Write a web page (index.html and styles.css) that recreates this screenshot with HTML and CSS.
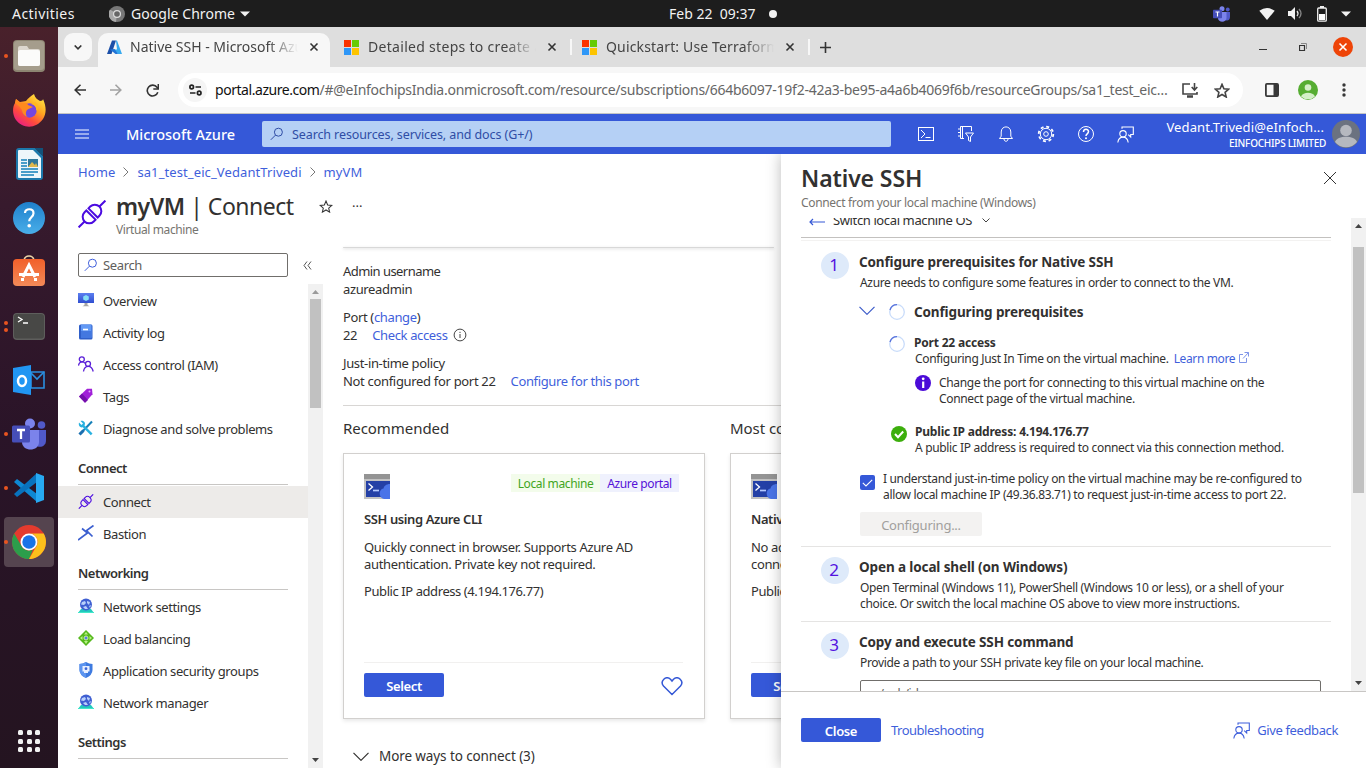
FILE: index.html
```html
<!DOCTYPE html>
<html lang="en">
<head>
<meta charset="utf-8">
<title>Native SSH - Microsoft Azure</title>
<link rel="stylesheet" href="styles.css">
</head>
<body>
<svg class="defs" width="0" height="0" aria-hidden="true">
  <defs>
    <linearGradient id="gBlue" x1="0" y1="0" x2="0" y2="1"><stop offset="0" stop-color="#5c7ff0"/><stop offset="1" stop-color="#2f4fd0"/></linearGradient>
    <linearGradient id="gFox" x1="0.9" y1="0" x2="0.2" y2="1"><stop offset="0" stop-color="#fff04a"/><stop offset=".4" stop-color="#ffa620"/><stop offset=".7" stop-color="#ff4a3d"/><stop offset="1" stop-color="#e51a8c"/></linearGradient>
    <linearGradient id="gOrange" x1="0" y1="0" x2="0" y2="1"><stop offset="0" stop-color="#f2602a"/><stop offset="1" stop-color="#f28a58"/></linearGradient>
    <linearGradient id="gHelp" x1="0" y1="0" x2="0" y2="1"><stop offset="0" stop-color="#1f80cc"/><stop offset="1" stop-color="#49aee9"/></linearGradient>
  </defs>
  <symbol id="search" viewBox="0 0 14 14"><g fill="none" stroke="currentColor"><circle cx="8.400" cy="5.200" r="4"/><path d="M5.500 8.100.8 12.800"/></g></symbol>
  <symbol id="plug" viewBox="0 0 28 28"><g fill="none" stroke="#4b0be0" stroke-width="2" transform="rotate(-45 14 14)"><path d="M-5 14H3.500M24.500 14H33"/><path d="M12.500 7.500H10a6.500 6.500 0 0 0 0 13h2.500Z"/><path d="M15.500 7.500H18a6.500 6.500 0 0 1 0 13h-2.500Z"/></g></symbol>
  <symbol id="globe" viewBox="0 0 16 16"><path d="M3 11h10l3 4H0Z" fill="#22c9bd"/><path d="M0 14h16v1H0Z" fill="#42e8ca"/><circle cx="8" cy="6.500" r="6" fill="#3f5fd2"/><path d="M4 4l3-1 1 2-2 2-3-.500ZM9 3l3 1-1 3-2-2ZM5 9l3-1 2 3H7ZM11 8l2-1-1 3Z" fill="#b9d0fb"/></symbol>
  <symbol id="cli" viewBox="0 0 26 25"><path d="M0 0h26v5H0Z" fill="#949494"/><path d="M0 5h26v20H0Z" fill="#c2c2c2"/><path d="M2 7h24v16H2Z" fill="#2440a6"/><path d="m4.500 9.500 4 3.500-4 3.500" fill="none" stroke="#fff" stroke-width="1.300"/><path d="M9 16.500h6" stroke="#b4c9ff" stroke-width="1.700"/><path d="M26 10c-4 0-6 2.200-6.500 4.500-5 .5-5.300 9.500.5 10.500h6Z" fill="#4a74e8"/></symbol>
  <symbol id="feedback" viewBox="0 0 17 17"><g fill="none" stroke="currentColor" stroke-width="1.100"><circle cx="6" cy="7.800" r="3.200"/><path d="M.800 16.500c.5-3.500 2.500-5.400 5.200-5.400s4.700 1.900 5.200 5.400"/><path d="M5 2.800V1h11.300v7.500h-2.600v2.400l-2.500-2.300"/></g></symbol>
  <symbol id="spin" viewBox="0 0 16 16"><circle cx="8" cy="8" r="7.300" fill="none" stroke="#c9dcfa" stroke-width="1.300"/><path d="M1 6A7.300 7.300 0 0 1 8 .7" fill="none" stroke="#5872dc" stroke-width="1.300"/></symbol>
  <symbol id="chev" viewBox="0 0 16 9"><path d="m.5.8 7.500 7.500L15.500.8" fill="none" stroke="currentColor" stroke-width="1.200"/></symbol>
  <symbol id="x" viewBox="0 0 10 10"><path d="m1.500 1.500 7 7M8.500 1.500l-7 7" fill="none" stroke="currentColor" stroke-width="1.600"/></symbol>
  <symbol id="ms" viewBox="0 0 15 15"><path fill="#fb3300" d="M0 0h7v7H0Z"/><path fill="#67cb03" d="M8 0h7v7H8Z"/><path fill="#2f97f7" d="M0 8h7v7H0Z"/><path fill="#fdc400" d="M8 8h7v7H8Z"/></symbol>
  <symbol id="teams" viewBox="0 0 34 32"><circle cx="18" cy="5.500" r="5" fill="#7b83eb"/><circle cx="29.500" cy="7" r="3.800" fill="#5059c9"/><path d="M23 12h11v10c0 8-8 8-11 5Z" fill="#5059c9"/><path d="M10 12h17v12c0 10-17 10-17 0Z" fill="#7b83eb"/><rect y="7.500" width="18" height="17" rx="1.500" fill="#464eb8"/><path d="M5 12h8M9 12v9" stroke="#fff" stroke-width="2.300"/></symbol>
</svg>

<header class="gnome">
  <span class="activities">Activities</span>
  <svg class="gchrome" width="16" height="16" viewBox="0 0 16 16"><circle cx="8" cy="8" r="8" fill="#777"/><path d="M8 8 1 3.500A8 8 0 0 0 7 16Z" fill="#a8a8a8"/><circle cx="8" cy="8" r="4" fill="#ddd"/><circle cx="8" cy="8" r="2.800" fill="#666"/></svg>
  <span class="appname">Google Chrome</span>
  <svg width="10" height="6" viewBox="0 0 10 6"><path d="M0 .5h10L5 5.500Z" fill="#f2f2f2"/></svg>
  <span class="date">Feb 22&nbsp; 09:37</span>
  <i class="recdot"></i>
  <span class="tray">
    <svg width="17" height="16"><use href="#teams"/></svg>
    <svg class="wifi" width="16" height="12" viewBox="0 0 16 12"><path d="M.3 2.800Q8-2.600 15.700 2.800L8 12Z" fill="#f2f2f2"/></svg>
    <svg class="vol" width="15" height="13" viewBox="0 0 15 13"><path d="M0 4h3l4-4v13L3 9H0Z" fill="#f2f2f2"/><path d="M9 4q2 2.500 0 5" fill="none" stroke="#e5e5e5" stroke-width="1.300"/><path d="M11 2q4 4.500 0 9" fill="none" stroke="#888" stroke-width="1.300"/></svg>
    <svg class="bat" width="10" height="16" viewBox="0 0 10 16"><path d="M3 0h4v2H3Z" fill="#eee"/><rect x=".7" y="2" width="8.600" height="13.200" rx="1" fill="none" stroke="#eee" stroke-width="1.300"/><path d="M2 8h6v6H2Z" fill="#fff"/></svg>
    <svg width="10" height="6" viewBox="0 0 10 6"><path d="M0 .5h10L5 5.500Z" fill="#f2f2f2"/></svg>
  </span>
</header>

<div class="desk">
  <nav class="dock">
    <div class="app run"><svg width="32" height="32" viewBox="0 0 32 32"><rect width="32" height="32" rx="4" fill="#8d8572"/><rect x="1" y="1" width="30" height="29" rx="3" fill="#a59d8c"/><path d="M5 8q0-2 2-2h7l2 3h9q2 0 2 2v13q0 2-2 2H7q-2 0-2-2Z" fill="#dcd7ce"/><rect x="5" y="10" width="22" height="16" rx="2" fill="#fbfbfa"/></svg></div>
    <div class="app"><svg width="33" height="34" viewBox="0 0 33 34"><path d="M21 1c1 4 4 6 6 7 2 0 3-1 3-2 4 9 3 15 0 20-7 10-20 10-27 1C-1 21-.5 14 2 10l1-4 4 3 6-1c2-3 5-5 8-7Z" fill="url(#gFox)"/><circle cx="16.500" cy="17.500" r="7.200" fill="#7546e0"/><path d="M2 10l1-4 4 4 7 0 1 2 5 2c-2 1-5 2-6 3-2 3-1 6 1 7-4-1-6-4-6-7l-3-4Z" fill="#ff8a1e"/><path d="M18 11c4 1 6 4 5 7 3-2 3-7-1-9Z" fill="#ffb820"/></svg></div>
    <div class="app"><svg width="27" height="32" viewBox="0 0 27 32"><path d="M3 0h16l8 8v21q0 3-3 3H3q-3 0-3-3V3q0-3 3-3Z" fill="#1c78ab"/><path d="M3 2h14l8 8v20H3q-1 0-1-1V3q0-1 1-1Z" fill="#eef6fa"/><path d="M19 0h8v8Z" fill="#12527a"/><path d="M5 12h6M5 15h6M5 18h6M5 21h17M5 24h17M5 27h13" stroke="#1380b9" stroke-width="1.500"/><rect x="12" y="11" width="10" height="8" fill="#31789b"/><path d="m12 19 4-5 3 3 1-2 2 4Z" fill="#e0b84c"/></svg></div>
    <div class="app"><svg width="32" height="32" viewBox="0 0 32 32"><circle cx="16" cy="16" r="16" fill="url(#gHelp)"/><path d="M12 11c0-5 8.500-5 8.500.2 0 4-4.300 4-4.300 8" fill="none" stroke="#fff" stroke-width="2.200"/><circle cx="16.200" cy="23.800" r="1.800" fill="#fff"/></svg></div>
    <div class="app bag"><svg width="32" height="31" viewBox="0 0 32 31"><path d="M11 5q1-4 5-4t5 4" fill="none" stroke="#ead4a6" stroke-width="1.500"/><rect y="4" width="32" height="27" rx="4" fill="url(#gOrange)"/><path d="M10 22 16 10l6 12M6 19.500h20" fill="none" stroke="#fff" stroke-width="3"/><path d="M8 24.500h3M21 24.500h3" stroke="#fff" stroke-width="3"/></svg></div>
    <div class="app run two"><svg width="32" height="27" viewBox="0 0 32 27"><rect width="32" height="27" rx="4" fill="#5e5e5c"/><rect x="1" y="1" width="30" height="24.500" rx="3" fill="#484846"/><path d="m5 4 4 2.500L5 9M10 10h5" fill="none" stroke="#fff" stroke-width="1.300"/></svg></div>
    <div class="app"><svg width="32" height="30" viewBox="0 0 32 30"><path d="M18 7h13v16H18Z" fill="none" stroke="#2a8fe0" stroke-width="1.600"/><path d="m18 8 6 6 7-7" fill="none" stroke="#2a8fe0" stroke-width="1.600"/><path d="M0 3 18 0v30L0 27Z" fill="#2196f3"/><ellipse cx="9" cy="16" rx="4" ry="5" fill="none" stroke="#fff" stroke-width="2.500"/></svg></div>
    <div class="app run"><svg width="34" height="32"><use href="#teams"/></svg></div>
    <div class="app run"><svg width="30" height="30" viewBox="0 0 30 30"><path d="M0 9 3 6l20 15v8Z" fill="#0e88d3"/><path d="m0 21 3 3L23 9V0Z" fill="#0872bd"/><path d="m22 0 8 3v24l-8 3Z" fill="#27a9f2"/></svg></div>
    <div class="app run active"><svg width="34" height="34" viewBox="0 0 34 34"><circle cx="17" cy="17" r="17" fill="#e33b2e"/><path d="M2.300 8.500 9.600 21.200A8.500 8.500 0 0 0 21 24.500L17 34A17 17 0 0 1 2.300 8.500Z" fill="#2c9e4b"/><path d="M31.700 8.500A17 17 0 0 1 17 34l7.400-12.700A8.500 8.500 0 0 0 17 8.500Z" fill="#fcc01c"/><circle cx="17" cy="17" r="8.500" fill="#fff"/><circle cx="17" cy="17" r="6.700" fill="#1a73e8"/></svg></div>
    <div class="grid"><i></i><i></i><i></i><i></i><i></i><i></i><i></i><i></i><i></i></div>
  </nav>

  <section class="window">
    <div class="tabstrip">
      <button class="tabsearch"><svg width="8" height="5" viewBox="0 0 8 5"><path d="m.7.5 3.300 3.300L7.300.5" fill="none" stroke="#333" stroke-width="1.600"/></svg></button>
      <div class="tab on">
        <svg width="15" height="15" viewBox="0 0 15 15"><path d="M5 .5h4L4.500 14H0Z" fill="#1b4fa8"/><path d="M9 .5h1L15 14h-4L6 9.500h4Z" fill="#37a9ee"/><path d="m3 9.500 5.500 4.500H11L7.500 9Z" fill="#2174d6"/></svg>
        <span class="tt n1">Native SSH - Microsoft Azure</span><svg class="tx" width="10" height="10"><use href="#x"/></svg>
      </div>
      <div class="tab"><svg width="15" height="15"><use href="#ms"/></svg><span class="tt n2">Detailed steps to create an</span><svg class="tx" width="10" height="10"><use href="#x"/></svg><i class="tsep"></i></div>
      <div class="tab"><svg width="15" height="15"><use href="#ms"/></svg><span class="tt n3">Quickstart: Use Terraform</span><svg class="tx" width="10" height="10"><use href="#x"/></svg><i class="tsep"></i></div>
      <svg class="plus" width="11" height="11" viewBox="0 0 11 11"><path d="M5.500 0v11M0 5.500h11" stroke="#333" stroke-width="1.600"/></svg>
      <div class="winctl">
        <svg width="8" height="8" viewBox="0 0 8 8"><path d="M0 6.500h8" stroke="#333"/></svg>
        <svg width="8" height="8" viewBox="0 0 8 8"><path d="M.5 2.500h5v5h-5Z" fill="none" stroke="#333" stroke-width="1.200"/><path d="M2 .5h5.500v5.500" fill="none" stroke="#888"/></svg>
        <span class="wclose"><svg width="10" height="10"><use href="#x"/></svg></span>
      </div>
    </div>
    <div class="toolbar">
      <svg width="12" height="12" viewBox="0 0 12 12"><path d="M6.500.7 1.200 6l5.300 5.300M1.200 6H12" fill="none" stroke="#333" stroke-width="1.600"/></svg>
      <svg class="fwd" width="12" height="12" viewBox="0 0 12 12"><path d="M5.500.7 10.800 6l-5.300 5.300M10.800 6H0" fill="none" stroke="#a2a2a2" stroke-width="1.600"/></svg>
      <svg class="reload" width="13" height="13" viewBox="0 0 13 13"><path d="M11.800 8.200A5.400 5.400 0 1 1 11 3.300l.9 1.200" fill="none" stroke="#333" stroke-width="1.600"/><path d="M12.300 0v5h-5" fill="none" stroke="#333" stroke-width="1.500"/></svg>
      <div class="omni">
        <span class="site"><svg width="13" height="12" viewBox="0 0 13 12"><g fill="none" stroke="#222" stroke-width="1.700"><circle cx="2.700" cy="3" r="1.800"/><path d="M6.500 3h5.500M1 9h5.500"/><circle cx="10.200" cy="9" r="1.800"/></g></svg></span>
        <span class="url"><b>portal.azure.com</b>/#@eInfochipsIndia.onmicrosoft.com/resource/subscriptions/664b6097-19f2-42a3-be95-a4a6b4069f6b/resourceGroups/sa1_test_eic…</span>
        <svg class="inst" width="17" height="15" viewBox="0 0 17 15"><path d="M8 1H1v10h14V9" fill="none" stroke="#444" stroke-width="1.600"/><path d="M5 13.500h6" stroke="#444" stroke-width="2.500"/><path d="M12.500 0v6.500M9.700 4l2.800 3 2.800-3" fill="none" stroke="#444" stroke-width="1.600"/></svg>
        <svg class="star" width="16" height="15" viewBox="0 0 16 15"><path d="m8 1.400 1.900 4.400 4.800.4-3.600 3.200 1.100 4.600L8 11.500 3.800 14l1.100-4.600L1.300 6.200l4.800-.4Z" fill="none" stroke="#444" stroke-width="1.600"/></svg>
      </div>
      <svg class="side" width="14" height="14" viewBox="0 0 14 14"><rect x=".9" y=".9" width="12.200" height="12.200" rx="1" fill="none" stroke="#383838" stroke-width="1.800"/><path d="M8.500 1h4.500v12H8.500Z" fill="#383838"/></svg>
      <svg class="prof" width="20" height="20" viewBox="0 0 20 20"><circle cx="10" cy="10" r="10" fill="#56ad32"/><circle cx="10" cy="7.500" r="3.300" fill="#d4efc8"/><path d="M3 16.500c2-5 12-5 14 0a10 10 0 0 1-14 0Z" fill="#d4efc8"/></svg>
      <svg class="dots" width="4" height="14" viewBox="0 0 4 14"><g fill="#383838"><circle cx="2" cy="2" r="1.700"/><circle cx="2" cy="7" r="1.700"/><circle cx="2" cy="12" r="1.700"/></g></svg>
    </div>

    <div class="azbar">
      <svg width="14" height="10" viewBox="0 0 14 10"><path d="M0 1h14M0 5h14M0 9h14" stroke="#b9c6f3" stroke-width="1.400"/></svg>
      <span class="brand">Microsoft Azure</span>
      <div class="azsearch"><svg width="14" height="14"><use href="#search"/></svg><span>Search resources, services, and docs (G+/)</span></div>
      <div class="azicons">
        <svg width="18" height="16" viewBox="0 0 18 16"><rect x="1.500" y="1.500" width="15" height="13" fill="none" stroke="#fff"/><path d="m4 4 4 4-4 4M8.500 11.500h5" fill="none" stroke="#fff"/></svg>
        <svg width="18" height="18" viewBox="0 0 18 18"><g fill="none" stroke="#fff"><path d="M7 13.500H3.500v-12h11V6M5.500 1.500v12M1 4h2.500M1 7.500h2.500M1 11h2.500"/><path d="M8.500 8h8l-3 4v4.500l-2-1V12Z"/></g></svg>
        <svg width="18" height="18" viewBox="0 0 18 18"><path d="M2.500 13.500h13l-1.700-2.300V7c0-6.800-9.600-6.800-9.600 0v4.200ZM7 14c0 3 4 3 4 0" fill="none" stroke="#fff"/></svg>
        <svg width="18" height="18" viewBox="0 0 18 18"><g fill="none" stroke="#fff"><circle cx="9" cy="9" r="2.300"/><circle cx="9" cy="9" r="5.700"/><circle cx="9" cy="9" r="7.300" stroke-width="1.800" stroke-dasharray="3 2.730"/></g></svg>
        <svg width="18" height="18" viewBox="0 0 18 18"><circle cx="9" cy="9" r="7.500" fill="none" stroke="#fff"/><path d="M6.500 7c0-3.500 5-3.500 5-.4C11.500 9 9 8.700 9 11" fill="none" stroke="#fff" stroke-width="1.500"/><circle cx="9" cy="13.200" r="1" fill="#fff"/></svg>
        <svg width="17" height="17"><use href="#feedback"/></svg>
      </div>
      <div class="who"><span class="mail">Vedant.Trivedi@eInfoch...</span><span class="org">EINFOCHIPS LIMITED</span></div>
      <svg class="avatar" width="28" height="28" viewBox="0 0 28 28"><circle cx="14" cy="14" r="14" fill="#6b7280"/><circle cx="14" cy="10.500" r="5.800" fill="#b5b8bf"/><path d="M3 22c2-7 20-7 22 0a14 14 0 0 1-22 0Z" fill="#b5b8bf"/></svg>
    </div>

    <div class="portal">
      <main class="main">
        <div class="crumbs"><a>Home</a><svg width="6" height="10" viewBox="0 0 6 10"><path d="m.5.5 4.500 4.500L.5 9.500" fill="none" stroke="#777"/></svg><a>sa1_test_eic_VedantTrivedi</a><svg width="6" height="10" viewBox="0 0 6 10"><path d="m.5.5 4.500 4.500L.5 9.500" fill="none" stroke="#777"/></svg><a>myVM</a></div>
        <div class="title">
          <svg class="bigplug" width="28" height="28"><use href="#plug"/></svg>
          <div class="tcol"><h1><b>myVM</b><span> | Connect</span></h1><div class="kind">Virtual machine</div></div>
          <svg class="fav" width="14" height="13" viewBox="0 0 16 15"><path d="m8 1.200 1.900 4.600 4.800.4-3.600 3.200 1.100 4.600L8 11.500 3.800 14l1.100-4.600L1.300 6.200l4.800-.4Z" fill="none" stroke="#333" stroke-width="1.200"/></svg>
          <span class="more">···</span>
        </div>
        <div class="cols">
          <aside class="side-menu">
            <div class="msearch"><div class="mbox"><svg width="14" height="14"><use href="#search"/></svg><span>Search</span></div><svg width="9" height="9" viewBox="0 0 9 9"><path d="M4 .5 1 4.500l3 4M8 .5 5 4.500l3 4" fill="none" stroke="#555"/></svg></div>
            <div class="mscroll">
              <div class="mlist">
                <div class="mi"><svg width="16" height="16" viewBox="0 0 16 16"><path d="M0 1h16v10H0Z" fill="url(#gBlue)"/><path d="m8 3 2.800 1.500v3L8 9 5.200 7.500v-3Z" fill="#85def5"/><path d="M6.500 11h3v2l2 1.300h-7l2-1.300Z" fill="#a5a5a5"/></svg><span>Overview</span></div>
                <div class="mi"><svg width="16" height="16" viewBox="0 0 16 16"><rect x="1" y=".5" width="13.500" height="15" rx="1.500" fill="#2f5fc9"/><rect x="3" y=".5" width="10.500" height="13" fill="#6299f5"/><rect x="3" y="7" width="10.500" height="7" fill="#4478e0"/><path d="M5 5.500h5" stroke="#fff" stroke-width="1.600"/></svg><span>Activity log</span></div>
                <div class="mi"><svg width="16" height="16" viewBox="0 0 16 16"><g fill="none" stroke="#5a1fd8" stroke-width="1.300"><circle cx="3.800" cy="3.300" r="2.500"/><circle cx="10" cy="7.800" r="2.500"/><path d="M.5 9.500C1 7 2.500 5.800 4 5.800s2.500.5 3.200 1.500M5.500 15.500c.5-3.500 2.500-5.200 4.700-5.200s4.300 1.700 5 5.200"/></g></svg><span>Access control (IAM)</span></div>
                <div class="mi"><svg width="16" height="16" viewBox="0 0 16 16"><path d="M9 .8h5l.5 5.500L7 14.800 1 8.500Z" fill="#a020d8"/><path d="M7 14.800 1 8.500l3-3 6 6.500Z" fill="#7410ab"/><circle cx="11.500" cy="3.500" r="1" fill="#e2a6f7"/></svg><span>Tags</span></div>
                <div class="mi"><svg width="16" height="16" viewBox="0 0 16 16"><path d="M2 14 14 1.500" stroke="#1680b8" stroke-width="2"/><path d="M1 2.500 3.500 5 5 3.500 2.500 1C6 .2 8 3 6.500 5.500l8 8-1.700 1.800-8-8C2 8 .2 5.500 1 2.500Z" fill="#29b1e0"/><path d="m1.500 14.500 4-4" stroke="#1b6fb0" stroke-width="3"/></svg><span>Diagnose and solve problems</span></div>
                <h3>Connect</h3>
                <div class="mi sel"><svg width="15" height="15"><use href="#plug"/></svg><span>Connect</span></div>
                <div class="mi"><svg width="16" height="16" viewBox="0 0 16 16"><g fill="none" stroke="#3b5fd0" stroke-width="1.700"><path d="m0 15 9.500-7L4 3.500"/><path d="M15.500.5 8.500 5.500l6 6"/></g></svg><span>Bastion</span></div>
                <h3>Networking</h3>
                <div class="mi"><svg width="16" height="16"><use href="#globe"/></svg><span>Network settings</span></div>
                <div class="mi"><svg width="16" height="16" viewBox="0 0 16 16"><path d="m8 0 8 8-8 8-8-8Z" fill="#55b81d"/><path d="m8 2 2 2.500H6ZM2 8l2.500-2v4ZM14 8l-2.500-2v4ZM8 14l-2-3h4Z" fill="#b9f286"/><circle cx="8" cy="8" r="2" fill="#5b79e9" stroke="#c5f79d"/></svg><span>Load balancing</span></div>
                <div class="mi"><svg width="16" height="16" viewBox="0 0 16 16"><path d="M8 0q3 2 6.500 2v6q0 5-6.500 8Q1.500 13 1.500 8V2Q5 2 8 0Z" fill="#3e7be0"/><path d="M8 0v16Q1.500 13 1.500 8V2Q5 2 8 0Z" fill="#5c94ef"/><path d="M4.500 4h7v5.500h-7ZM6 11h4V9.500H6Z" fill="#e8f0ff"/><circle cx="8" cy="6.700" r="1.400" fill="#3e66d6"/></svg><span>Application security groups</span></div>
                <div class="mi"><svg width="16" height="16"><use href="#globe"/></svg><span>Network manager</span></div>
                <h3>Settings</h3>
              </div>
              <div class="sb"><svg class="up" width="7" height="4" viewBox="0 0 7 4"><path d="m0 4 3.500-4L7 4Z" fill="#9a9a9a"/></svg><i class="thumb"></i><svg class="dn" width="7" height="4" viewBox="0 0 7 4"><path d="m0 0 3.500 4L7 0Z" fill="#444"/></svg></div>
            </div>
          </aside>
          <section class="body">
            <div class="topcard"></div>
            <dl>
              <dt class="adm">Admin username</dt><dd>azureadmin</dd>
              <dt>Port (<a>change</a>)</dt><dd><span>22</span><a>Check access</a><svg width="14" height="14" viewBox="0 0 14 14"><circle cx="7" cy="7" r="5.900" fill="none" stroke="#444"/><path d="M7 6v4M7 3.800v1.200" stroke="#444"/></svg></dd>
              <dt>Just-in-time policy</dt><dd><span class="nc">Not configured for port 22</span><a>Configure for this port</a></dd>
            </dl>
            <div class="cards">
              <div class="cardcol"><h2>Recommended</h2>
                <article class="card">
                  <div class="chead"><svg width="26" height="25"><use href="#cli"/></svg><span class="tag g">Local machine</span><span class="tag p">Azure portal</span></div>
                  <h4>SSH using Azure CLI</h4>
                  <p class="desc">Quickly connect in browser. Supports Azure AD<br>authentication. Private key not required.</p>
                  <p class="ip">Public IP address (4.194.176.77)</p>
                  <div class="cfoot"><button class="btn">Select</button><svg width="22" height="19" viewBox="0 0 22 19"><path d="M11 17.500 2.500 9C-1.500 4 5-1.800 9.500 2.300L11 4l1.500-1.700C17-1.800 23.500 4 19.500 9Z" fill="none" stroke="#3558d6" stroke-width="1.500"/></svg></div>
                </article></div>
              <div class="cardcol"><h2>Most common</h2>
                <article class="card">
                  <div class="chead"><svg width="26" height="25"><use href="#cli"/></svg></div>
                  <h4>Native</h4>
                  <p class="desc">No added<br>connect</p>
                  <p class="ip">Public IP</p>
                  <div class="cfoot"><button class="btn">Select</button></div>
                </article></div>
            </div>
            <div class="ways"><svg width="16" height="9"><use href="#chev"/></svg><span>More ways to connect (3)</span></div>
          </section>
        </div>
      </main>

      <aside class="panel">
        <div class="phead"><div><h2>Native SSH</h2><div class="psub">Connect from your local machine (Windows)</div></div><svg width="14" height="14" viewBox="0 0 14 14"><path d="m1 1 12 12M13 1 1 13" stroke="#333"/></svg></div>
        <div class="pscroll">
          <div class="pcontent">
            <div class="switch"><svg width="16" height="8" viewBox="0 0 16 8"><path d="M4 1 1 4l3 3M1 4h15" fill="none" stroke="#3558d6" stroke-width="1.200"/></svg><span>Switch local machine OS</span><svg class="sc" width="8" height="5" viewBox="0 0 8 5"><path d="m.5.5 3.500 3.500L7.500.5" fill="none" stroke="#444"/></svg></div>
            <div class="thin"></div>
            <section class="step s1"><div class="num">1</div><div class="sb2">
              <h3>Configure prerequisites for Native SSH</h3>
              <p>Azure needs to configure some features in order to connect to the VM.</p>
              <div class="conf"><svg class="cv" width="16" height="9"><use href="#chev"/></svg><svg width="16" height="16"><use href="#spin"/></svg><h3>Configuring prerequisites</h3></div>
              <div class="chk port"><svg width="16" height="16"><use href="#spin"/></svg><div><h5>Port 22 access</h5><p><span>Configuring Just In Time on the virtual machine.</span><a>Learn more</a><svg class="ext" width="10" height="11" viewBox="0 0 10 11"><path d="M4 2.500H.5v8h7V6M5.500.5h4v4M9.500.5 4 6.500" fill="none" stroke="#7f95e8"/></svg></p></div></div>
              <div class="note"><svg width="16" height="16" viewBox="0 0 16 16"><circle cx="8" cy="8" r="8" fill="#4b0bd8"/><path d="M8.200 6.500V13" stroke="#fff" stroke-width="2.200" fill="none"/><circle cx="8.200" cy="3.800" r="1.400" fill="#fff"/></svg><p>Change the port for connecting to this virtual machine on the<br>Connect page of the virtual machine.</p></div>
              <div class="chk pub"><svg width="16" height="16" viewBox="0 0 16 16"><circle cx="8" cy="8" r="8" fill="#3cae0c"/><path d="m4 8 3 3.200 5.200-5.700" fill="none" stroke="#fff" stroke-width="2"/></svg><div><h5>Public IP address: 4.194.176.77</h5><p>A public IP address is required to connect via this connection method.</p></div></div>
              <div class="agree"><span class="cb"><svg width="11" height="8" viewBox="0 0 11 8"><path d="m.8 3.800 3.200 3.200L10.200.8" fill="none" stroke="#fff" stroke-width="1.100"/></svg></span><p>I understand just-in-time policy on the virtual machine may be re-configured to<br>allow local machine IP (49.36.83.71) to request just-in-time access to port 22.</p></div>
              <button class="dis">Configuring...</button>
            </div></section>
            <section class="step s2"><div class="num">2</div><div class="sb2">
              <h3>Open a local shell (on Windows)</h3>
              <p>Open Terminal (Windows 11), PowerShell (Windows 10 or less), or a shell of your<br>choice. Or switch the local machine OS above to view more instructions.</p>
            </div></section>
            <section class="step s3"><div class="num">3</div><div class="sb2">
              <h3>Copy and execute SSH command</h3>
              <p>Provide a path to your SSH private key file on your local machine.</p>
              <div class="field">~/.ssh/id_rsa</div>
            </div></section>
          </div>
          <div class="sb"><svg class="up" width="7" height="4" viewBox="0 0 7 4"><path d="m0 4 3.500-4L7 4Z" fill="#444"/></svg><i class="thumb"></i><svg class="dn" width="7" height="4" viewBox="0 0 7 4"><path d="m0 0 3.500 4L7 0Z" fill="#444"/></svg></div>
        </div>
        <footer class="pfoot"><button class="btn">Close</button><a class="tr">Troubleshooting</a><a class="gf"><svg width="17" height="17"><use href="#feedback"/></svg><span>Give feedback</span></a></footer>
      </aside>
    </div>
  </section>
</div>
</body>
</html>
```

FILE: styles.css
```css
* { box-sizing: border-box; margin: 0; padding: 0; }
body { width: 1366px; height: 768px; overflow: hidden; display: flex; flex-direction: column; font-family: "Noto Sans", sans-serif; font-size: 13px; color: #323130; background: #fff; white-space: nowrap; }
svg { display: block; flex: none; }
.defs { position: absolute; }
a { color: #3f5fdb; }
button { font: inherit; border: 0; }
i { display: block; }
h1, h2, h3, h4, h5 { font-weight: 600; }

.gnome { height: 27px; flex: none; background: #1d1d1d; color: #f2f2f2; display: flex; align-items: center; font-size: 14px; }
.activities { width: 97px; padding-left: 12px; letter-spacing: .45px; }
.gchrome { margin: 0 6px 0 12px; }
.appname { width: 109px; letter-spacing: .05px; }
.date { margin-left: 419px; width: 100px; letter-spacing: 0; margin-top: -1px; }
.recdot { width: 8px; height: 8px; border-radius: 50%; background: #f2f2f2; }
.tray { display: flex; align-items: center; margin-left: auto; padding-right: 15px; }
.wifi { margin-left: 29px; }
.vol { margin-left: 13px; }
.bat { margin: 0 14px 0 14px; }

.desk { flex: 1; min-height: 0; display: flex; }
.dock { width: 58px; flex: none; background: linear-gradient(#49212b, #371a2d 24%, #2a1428 55%, #241420 100%); padding: 4px 4px 0; display: flex; flex-direction: column; gap: 4px; }
.app { position: relative; width: 50px; height: 50px; flex: none; display: flex; align-items: center; justify-content: center; border-radius: 4px; }
.app.active { background: #55444f; }
.app.bag { padding-bottom: 4px; }
.run::before { content: ""; position: absolute; left: 0; top: 23px; width: 4px; height: 4px; border-radius: 50%; background: #e95420; }
.run.two::before { top: 20px; box-shadow: 0 7px #e95420; }
.grid { margin: 159px auto 0; display: grid; grid-template-columns: repeat(3, 5px); gap: 3.500px; }
.grid i { width: 5px; height: 5px; border-radius: 1.500px; background: #f2f2f2; }

.window { flex: 1; min-width: 0; display: flex; flex-direction: column; }
.tabstrip { height: 40px; flex: none; background: #dedede; display: flex; align-items: center; padding-left: 6px; }
.tabsearch { width: 28px; height: 28px; border-radius: 9px; background: #f7f7f7; display: flex; align-items: center; justify-content: center; margin-right: 6px; }
.tab { width: 238px; height: 40px; flex: none; display: flex; align-items: center; font-size: 14px; color: #444; padding-left: 10px; }
.tab.on { width: 232px; height: 34px; margin: 6px 4px 0 0; padding: 0 0 6px 9px; background: #f7f7f7; border-radius: 10px 10px 0 0; }
.tab svg:first-child { margin-right: 9px; }
.tt { width: 168px; margin-top: -2px; overflow: hidden; -webkit-mask-image: linear-gradient(90deg, #000 82%, transparent); mask-image: linear-gradient(90deg, #000 82%, transparent); }
.n1 { letter-spacing: 0; margin-left: -1px; }
.n2 { letter-spacing: .3px; }
.n3 { letter-spacing: .15px; }
.tx { margin-left: 11px; color: #333; }
.tsep { width: 2px; height: 16px; background: #f7f7f7; margin-left: auto; }
.plus { margin-left: 10px; }
.winctl { margin-left: auto; display: flex; align-items: center; gap: 32px; padding-right: 13px; }
.wclose { width: 20px; height: 20px; margin-left: -6px; border-radius: 50%; background: #ee4408; color: #fff; display: flex; align-items: center; justify-content: center; }
.toolbar { height: 47px; flex: none; background: #f7f7f7; border-bottom: 1px solid #c4c4c4; display: flex; align-items: center; padding-left: 16px; }
.fwd { margin-left: 24px; }
.reload { margin-left: 24px; }
.omni { margin-left: 19px; width: 1065px; height: 34px; border-radius: 17px; background: #fff; display: flex; align-items: center; padding-left: 5px; }
.site { width: 24px; height: 24px; border-radius: 50%; background: #f5f5f5; display: flex; align-items: center; justify-content: center; }
.url { margin-left: 8px; margin-top: -1px; width: 967px; font-size: 14px; color: #666; letter-spacing: -.26px; }
.url b { font-weight: 400; color: #111; letter-spacing: -.45px; }
.star { margin-left: 15px; }
.side { margin-left: 22px; }
.prof { margin-left: 19px; }
.dots { margin-left: 24px; }

.azbar { height: 40px; flex: none; background: #3558d8; color: #fff; display: flex; align-items: center; padding-left: 17px; }
.brand { margin-left: 37px; width: 136px; font-size: 14.500px; font-weight: 500; letter-spacing: 0; }
.azsearch { width: 629px; height: 26px; border-radius: 2px; background: #b5d0f5; color: #2f4da5; display: flex; align-items: center; padding-left: 8px; gap: 8px; font-size: 12.500px; letter-spacing: -.1px; }
.azicons { display: flex; align-items: center; gap: 22px; margin-left: 26px; }
.who { width: 191px; text-align: right; display: flex; flex-direction: column; margin-left: auto; margin-right: 6px; }
.mail { font-size: 13px; line-height: 17px; letter-spacing: .12px; margin-right: 2px; }
.org { font-size: 10px; line-height: 14px; font-weight: 500; letter-spacing: -.26px; }
.avatar { margin-right: 6px; }

.portal { flex: 1; min-height: 0; display: flex; }
.main { width: 723px; flex: none; overflow: hidden; display: flex; flex-direction: column; letter-spacing: -.36px; }
.crumbs { height: 36px; flex: none; display: flex; align-items: center; padding-left: 20px; gap: 8px; letter-spacing: .1px; }
.title { height: 57px; flex: none; display: flex; padding-left: 20px; }
.bigplug { margin-top: 10px; }
.tcol { margin-left: 10px; width: 199px; }
h1 { font-size: 23px; line-height: 32px; font-weight: 400; letter-spacing: -.48px; }
h1 b { font-weight: 600; }
.kind { font-size: 12px; line-height: 16px; color: #76746f; letter-spacing: -.4px; }
.fav { margin-top: 10px; margin-left: 4px; }
.more { margin: 8px 0 0 19px; line-height: 16px; letter-spacing: 0; }
.cols { flex: 1; min-height: 0; display: flex; }
.side-menu { width: 265px; flex: none; display: flex; flex-direction: column; }
.msearch { height: 37px; flex: none; padding: 6px 0 7px 20px; display: flex; align-items: center; gap: 15px; }
.mbox { width: 210px; height: 24px; border: 1px solid #706e6b; border-radius: 2px; display: flex; align-items: center; padding-left: 5px; gap: 5px; color: #605e5c; }
.mbox svg { color: #3f5fdb; }
.mscroll { flex: 1; min-height: 0; display: flex; }
.mlist { width: 250px; padding-top: 1px; overflow: hidden; }
.mi { height: 32px; display: flex; align-items: center; padding-left: 20px; letter-spacing: -.4px; }
.mi svg { width: 16px; margin-right: 9px; margin-top: -2px; }
.mi.sel { background: #edebe9; }
.mlist h3 { height: 40px; margin: 0 20px 1px; padding-top: 7px; line-height: 32px; font-size: 13px; border-bottom: 1px solid #c8c6c4; letter-spacing: -.5px; }
.sb { width: 15px; background: #f1f1f1; display: flex; flex-direction: column; align-items: center; }
.sb .up { margin-top: 6px; }
.sb .dn { margin-top: auto; margin-bottom: 6px; }
.thumb { width: 11px; height: 109px; margin-top: 5px; background: #c1c1c1; }

.body { margin-left: 20px; flex: 1; min-width: 0; }
.topcard { width: 431px; height: 1px; border-radius: 2px; background: #d8d8d8; box-shadow: 0 1px 3px #ccc; }
dl { padding-top: 14px; height: 158px; line-height: 18px; border-bottom: 1px solid #d8d6d4; }
.adm { letter-spacing: -.55px; }
.nc { letter-spacing: -.32px; }
dd { margin-bottom: 10px; display: flex; align-items: center; }
dd a { margin-left: 15px; }
dd svg { margin-left: 5px; }
.cards { display: flex; gap: 25px; width: 780px; }
.cardcol h2 { font-size: 15px; font-weight: 400; line-height: 20px; padding: 12px 0 15px; letter-spacing: -.05px; }
.card { width: 362px; height: 266px; border: 1px solid #d2d0ce; box-shadow: 0 2px 4px #00000018; padding: 20px 21px 20px 20px; display: flex; flex-direction: column; }
.chead { display: flex; align-items: flex-start; height: 35px; }
.tag { height: 18px; line-height: 19px; font-size: 12px; text-align: center; letter-spacing: -.38px; }
.tag.g { width: 89px; margin-left: 121px; background: #f3fceb; color: #41a51e; }
.tag.p { width: 79px; background: #eff1fd; color: #5512d8; }
h4 { font-size: 13px; line-height: 20px; letter-spacing: -.4px; }
.desc { margin-top: 10px; line-height: 17px; letter-spacing: -.34px; }
.ip { margin-top: 9px; line-height: 19px; letter-spacing: -.42px; }
.cfoot { margin-top: auto; height: 36px; border-top: 1px solid #f1f0ef; display: flex; justify-content: space-between; padding-top: 10px; }
.cfoot svg { margin-top: 4px; }
.btn { width: 80px; height: 24px; line-height: 26px; background: #3558d8; color: #fff; border-radius: 2px; font-size: 13px; font-weight: 600; letter-spacing: -.35px; text-align: center; }
.ways { display: flex; align-items: center; padding: 26px 0 0 10px; gap: 10px; line-height: 22px; font-size: 13.500px; letter-spacing: -.1px; }

.panel { position: relative; width: 585px; flex: none; background: #fff; box-shadow: 0 0 14px #00000045; clip-path: inset(0 0 0 -20px); display: flex; flex-direction: column; letter-spacing: -.33px; }
.phead { height: 64px; flex: none; padding: 8px 29px 0 20px; display: flex; justify-content: space-between; }
.phead h2 { font-size: 23px; line-height: 32px; letter-spacing: -.1px; }
.phead svg { margin-top: 9px; }
.psub { font-size: 12px; line-height: 17px; color: #76746f; }
.pscroll { height: 473px; flex: none; display: flex; justify-content: space-between; overflow: hidden; }
.pcontent { width: 530px; margin-left: 20px; }
.switch { height: 20px; display: flex; align-items: center; padding-left: 8px; border-bottom: 1px solid #c3c1bf; padding-bottom: 15px; }
.switch span { margin: 0 10px 0 8px; line-height: 20px; letter-spacing: -.38px; }
.switch svg { margin-top: 3px; }
.switch .sc { margin-top: 1px; }
.thin { height: 3px; border-bottom: 1px solid #f3f2f1; }
.step { display: flex; padding-left: 20px; border-bottom: 1px solid #e5e4e3; }
.num { width: 28px; height: 27px; border-radius: 50%; background: #deeafa; color: #5312df; font-size: 17px; line-height: 26px; text-align: center; padding-right: 2px; margin-top: 11px; }
.sb2 { margin-left: 10px; flex: 1; padding-top: 11px; }
.sb2 h3 { font-size: 13.500px; line-height: 20px; font-weight: 700; letter-spacing: -.12px; }
.sb2 p { font-size: 12px; line-height: 16px; padding-left: 1px; }
.sb2 > h3 + p { margin-top: 3px; }
.s1 { height: 306px; }
.s2 { height: 75px; }
.s2 .sb2, .s3 .sb2 { padding-top: 10px; }
.s2 .num, .s3 .num { margin-top: 10px; }
.s3 { border: 0; }
.conf { display: flex; align-items: center; margin-top: 11px; height: 20px; }
.cv { color: #3c5bc9; margin-right: 14px; margin-top: -3px; }
.conf h3 { margin-left: 9px; }
.chk { display: flex; align-items: flex-start; padding-left: 30px; }
.chk h5 { font-size: 12px; line-height: 16px; font-weight: 700; letter-spacing: -.19px; }
.port { margin-top: 13px; }
.port > svg { margin: 1px 9px 0 0; }
.port p { display: flex; padding-left: 0; margin-left: 1px; }
.port a { margin-left: 5px; letter-spacing: -.38px; }
.ext { margin: 1px 0 0 4px; }
.note { display: flex; padding-left: 56px; margin-top: 8px; gap: 7px; }
.pub { margin-top: 17px; padding-left: 32px; }
.pub > svg { margin: 2px 8px 0 0; }
.pub p { padding: 0; }
.agree { display: flex; margin: 15px 0 0 1px; gap: 7px; }
.cb { width: 15px; height: 15px; margin-top: 4px; background: #3558d8; border-radius: 2px; display: flex; align-items: center; justify-content: center; }
.dis { display: block; margin: 9px 0 0 1px; width: 122px; height: 24px; line-height: 26px; background: #f3f2f1; color: #a19f9d; border-radius: 2px; letter-spacing: -.25px; }
.field { margin: 9px 0 0 1px; width: 461px; height: 24px; border: 1px solid #706e6b; border-radius: 2px; color: #605e5c; font-size: 12px; line-height: 25px; padding-left: 12px; }
.pscroll .sb .thumb { height: 246px; margin-top: 19px; }
.pfoot { flex: 1; border-top: 1px solid #c8c6c4; display: flex; align-items: center; padding: 0 28px 0 20px; }
.tr { margin-left: 10px; letter-spacing: -.5px; }
.gf { margin-left: auto; display: flex; align-items: center; gap: 7px; letter-spacing: -.38px; }
```
